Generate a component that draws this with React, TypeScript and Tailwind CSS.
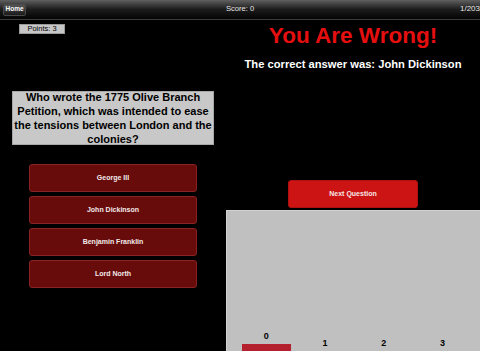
import React from "react";

const answers = ["George III", "John Dickinson", "Benjamin Franklin", "Lord North"];

// votes per points bucket, only the first one has a bar
const buckets = [
  { label: "0", height: 7 },
  { label: "1", height: 0 },
  { label: "2", height: 0 },
  { label: "3", height: 0 },
];

const TopBar = () => (
  <header className="relative h-[20px] flex items-center border-b border-[#3c3c3c] bg-gradient-to-b from-[#606060] via-[#1c1c1c] to-[#050505]">
    <button className="ml-[3px] h-[12px] w-[23px] rounded-[2px] border border-[#4a4a4a] bg-gradient-to-b from-[#555] to-[#1a1a1a] text-[6.5px] font-bold leading-none text-white">
      Home
    </button>
    <span className="absolute left-1/2 -translate-x-[14px] top-[4px] text-[7.6px] leading-[10px] text-[#e8e8e8]">
      Score: 0
    </span>
    <span className="ml-auto text-[8px] leading-[10px] text-[#e8e8e8] -mt-[1px]">1/203</span>
  </header>
);

const App = () => {
  return (
    <div className="w-[480px] h-[351px] overflow-hidden bg-black font-['Liberation_Sans',Arial,sans-serif]">
      <TopBar />
      <div className="flex h-[331px]">
        {/* Left: question and answers */}
        <section className="w-[226px] flex flex-col">
          <div className="ml-[19px] mt-[4px] w-[46px] h-[10px] bg-[#c6c6c6] border border-[#9a9a9a] flex items-center justify-center text-[7.5px] leading-none text-black">
            Points: 3
          </div>
          <div className="ml-[12px] mt-[57px] w-[202px] h-[54px] bg-[#c8c8c8] border border-[#a8a8a8] flex items-center justify-center text-center text-[11px] leading-[14px] font-bold text-black">
            Who wrote the 1775 Olive Branch Petition, which was intended to ease the tensions between London and the colonies?
          </div>
          <div className="ml-[29px] mt-[19px] w-[168px] flex flex-col gap-[4px]">
            {answers.map((answer) => (
              <button
                key={answer}
                className="h-[28px] rounded-[3px] border border-[#8a2222] bg-[#680b0b] text-[7px] font-bold text-[#f2eaea]"
              >
                {answer}
              </button>
            ))}
          </div>
        </section>

        {/* Right: result and chart */}
        <section className="flex-1 flex flex-col items-center">
          <h1 className="mt-[5px] text-[22.5px] leading-[22px] font-bold text-[#e60f0f]">You Are Wrong!</h1>
          <p className="mt-[11px] text-[11.2px] leading-[13px] font-bold text-white">
            The correct answer was: John Dickinson
          </p>
          <button className="mt-auto mb-[2px] w-[130px] h-[28px] rounded-[3px] border border-[#b01010] bg-[#cd1414] text-[7px] font-bold text-[#f6e8e8]">
            Next Question
          </button>
          <div className="w-full h-[141px] bg-[#c0c0c0] border-l border-t border-[#d2d2d2] pl-[10px] flex items-end">
            {buckets.map((b) => (
              <div key={b.label} className="w-[58.7px] flex flex-col items-center">
                <span className="text-[9px] leading-[10px] font-bold text-black">{b.label}</span>
                <div className="mt-[3px] w-[49px] bg-[#b5202e]" style={{ height: b.height }} />
              </div>
            ))}
          </div>
        </section>
      </div>
    </div>
  );
};

export default App;
